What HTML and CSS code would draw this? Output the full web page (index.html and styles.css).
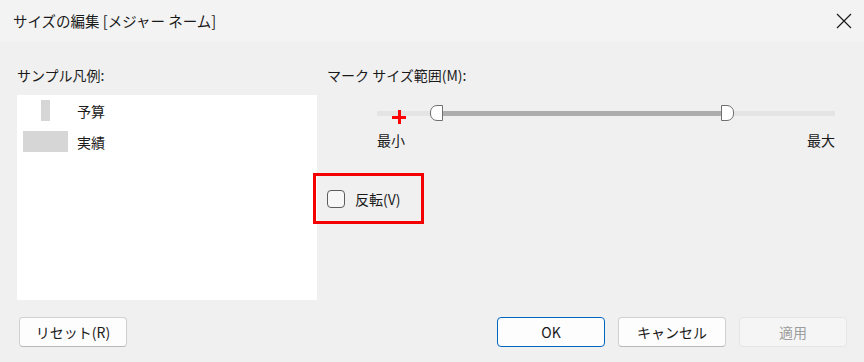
FILE: index.html
```html
<!DOCTYPE html>
<html lang="ja">
<head>
    <meta charset="UTF-8">
    <title>サイズの編集</title>
    <link rel="stylesheet" href="styles.css">
</head>
<body>
    <div class="dialog">
        <div class="titlebar">
            <span class="title">サイズの編集 [メジャー ネーム]</span>
            <svg class="close" width="16" height="16" viewBox="0 0 16 16">
                <path d="M1 1 L15 15 M15 1 L1 15" stroke="#1a1a1a" stroke-width="1.2" fill="none"/>
            </svg>
        </div>
        <div class="content">
            <div class="legend-col">
                <div class="label">サンプル凡例:</div>
                <div class="legend-box">
                    <div class="legend-row">
                        <span class="swatch-cell"><span class="swatch thin"></span></span>
                        <span>予算</span>
                    </div>
                    <div class="legend-row">
                        <span class="swatch-cell"><span class="swatch wide"></span></span>
                        <span>実績</span>
                    </div>
                </div>
            </div>
            <div class="range-col">
                <div class="label">マーク サイズ範囲(M):</div>
                <div class="slider">
                    <div class="track"></div>
                    <div class="fill"></div>
                    <div class="thumb thumb-min"></div>
                    <div class="thumb thumb-max"></div>
                    <span class="cross"></span>
                </div>
                <div class="slider-labels">
                    <span>最小</span>
                    <span>最大</span>
                </div>
                <label class="reverse">
                    <span class="checkbox"></span>
                    <span>反転(V)</span>
                </label>
            </div>
        </div>
        <div class="footer">
            <button class="btn">リセット(R)</button>
            <div class="footer-right">
                <button class="btn primary">OK</button>
                <button class="btn">キャンセル</button>
                <button class="btn disabled">適用</button>
            </div>
        </div>
    </div>
</body>
</html>
```

FILE: styles.css
```css
body {
    margin: 0;
    padding: 0;
    background: #f0f0f0;
    font-family: "Noto Sans CJK JP", "Noto Sans", sans-serif;
    font-size: 14px;
    color: #1a1a1a;
}

.dialog {
    width: 864px;
    height: 362px;
    display: flex;
    flex-direction: column;
}

.titlebar {
    height: 42px;
    display: flex;
    align-items: center;
    justify-content: space-between;
    padding: 0 12px 0 13px;
    background: #f3f3f3;
    box-sizing: border-box;
}

.title {
    font-size: 14.5px;
    line-height: 20px;
}

.content {
    display: flex;
    padding: 0 17px;
}

.label {
    margin-top: 23px;
    height: 20px;
    line-height: 20px;
}

.legend-col {
    width: 300px;
}

.legend-box {
    margin-top: 10px;
    height: 205px;
    background: #ffffff;
    padding-left: 6px;
    box-sizing: border-box;
}

.legend-row {
    height: 31px;
    display: flex;
    align-items: center;
    gap: 9px;
}

.swatch-cell {
    width: 45px;
    display: flex;
    justify-content: center;
}

.swatch {
    height: 21px;
    background: #d6d6d6;
}

.swatch.thin {
    width: 9px;
}

.swatch.wide {
    width: 45px;
}

.range-col {
    flex: 1;
    padding-left: 10px;
}

.slider {
    position: relative;
    height: 17px;
    margin: 20px 12px 0 50px;
}

.track {
    position: absolute;
    left: 0;
    right: 0;
    top: 6px;
    height: 5px;
    background: #e4e4e4;
}

.fill {
    position: absolute;
    left: 60px;
    right: 112px;
    top: 6px;
    height: 5px;
    background: #adadad;
}

.thumb {
    position: absolute;
    top: 0;
    width: 11px;
    height: 14px;
    background: #ffffff;
    border: 1.5px solid #6f6f6f;
}

.thumb-min {
    left: 53px;
    border-radius: 7px 0 0 7px;
}

.thumb-max {
    right: 101px;
    border-radius: 0 7px 7px 0;
}

.cross {
    position: absolute;
    left: 15px;
    top: 5px;
    width: 14px;
    height: 14px;
}

.cross::before,
.cross::after {
    content: "";
    position: absolute;
    background: #ff0000;
}

.cross::before {
    left: 0;
    top: 6px;
    width: 14px;
    height: 3px;
}

.cross::after {
    left: 6px;
    top: 0;
    width: 3px;
    height: 14px;
}

.slider-labels {
    display: flex;
    justify-content: space-between;
    margin: 8px 12px 0 50px;
    line-height: 20px;
}

.reverse {
    display: flex;
    align-items: center;
    gap: 10px;
    width: 111px;
    height: 51px;
    margin: 23px 0 0 -14px;
    border: 3px solid #f40000;
    box-sizing: border-box;
    padding-left: 11px;
}

.checkbox {
    width: 18px;
    height: 18px;
    border: 1px solid #5c5c5c;
    border-radius: 4px;
    background: #f7f7f7;
    box-sizing: border-box;
}

.footer {
    display: flex;
    justify-content: space-between;
    padding: 0 17px 0 19px;
    margin-top: 17px;
}

.footer-right {
    display: flex;
    gap: 13px;
}

.btn {
    width: 108px;
    height: 30px;
    font-family: inherit;
    font-size: 14px;
    color: #1a1a1a;
    background: #fdfdfd;
    border: 1px solid #d0d0d0;
    border-bottom-color: #b8b8b8;
    border-radius: 4px;
    padding: 0;
}

.btn.primary {
    border: 1.5px solid #0067c0;
}

.btn.disabled {
    background: #f5f5f5;
    border-color: #e5e5e5;
    color: #9d9d9d;
}
```
